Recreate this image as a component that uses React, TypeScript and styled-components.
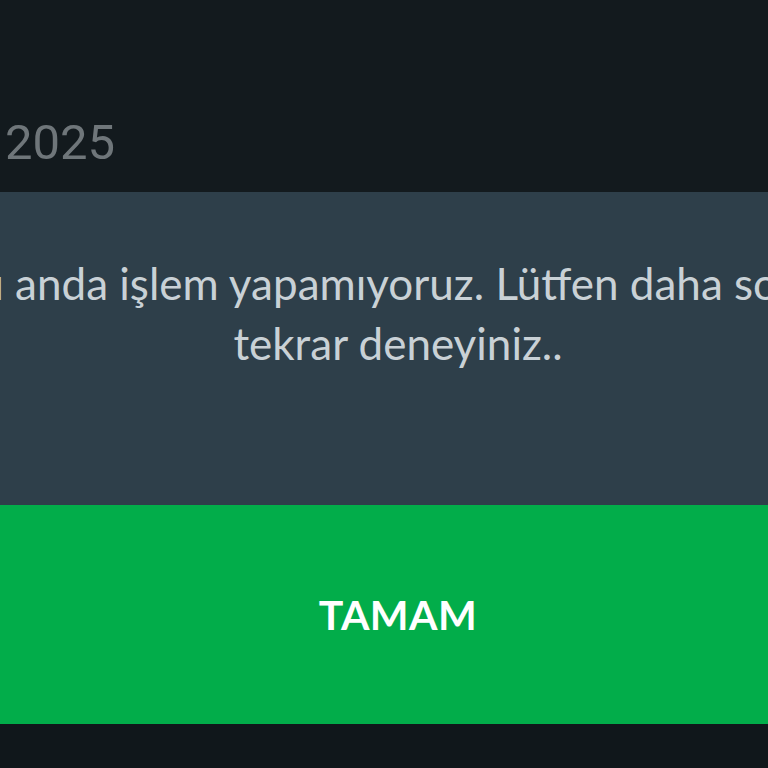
import styled, { createGlobalStyle } from 'styled-components'

const GlobalStyle = createGlobalStyle`
  html, body {
    margin: 0;
    padding: 0;
    background: #10171b;
    overflow: hidden;
  }
`

// the screenshot is a zoomed crop, so the screen is wider than the window
const Screen = styled.div`
  width: 1100px;
  height: 768px;
  margin-left: -152px;
  display: flex;
  flex-direction: column;
  background: #10171b;
`

const Header = styled.div`
  height: 192px;
  background: #131a1e;
  padding-left: 157px;
  box-sizing: border-box;
  display: flex;
  align-items: flex-start;
`

const Year = styled.div`
  font-family: Roboto, 'Liberation Sans', sans-serif;
  font-size: 49px;
  color: #6f767a;
  margin-top: 115px;
  line-height: 56px;
`

const Dialog = styled.div`
  display: flex;
  flex-direction: column;
`

const Body = styled.div`
  height: 313px;
  background: #2e3f4a;
  box-sizing: border-box;
  padding-top: 61px;
  display: flex;
  justify-content: center;
`

const Message = styled.p`
  margin: 0;
  width: 940px;
  text-align: center;
  font-family: Lato, 'Noto Sans', sans-serif;
  font-size: 44px;
  line-height: 60px;
  color: #c9d1d6;
`

const OkButton = styled.button`
  height: 219px;
  border: none;
  background: #02ad4a;
  color: #ffffff;
  font-family: Lato, 'Noto Sans', sans-serif;
  font-weight: 700;
  font-size: 41px;
  letter-spacing: 0.5px;
  padding: 0;
  cursor: pointer;
`

const App = () => {
  return (
    <>
      <GlobalStyle />
      <Screen>
        <Header>
          <Year>2025</Year>
        </Header>
        <Dialog>
          <Body>
            <Message>
              Şu anda işlem yapamıyoruz. Lütfen daha sonra tekrar deneyiniz..
            </Message>
          </Body>
          <OkButton type="button">TAMAM</OkButton>
        </Dialog>
      </Screen>
    </>
  )
}

export default App
